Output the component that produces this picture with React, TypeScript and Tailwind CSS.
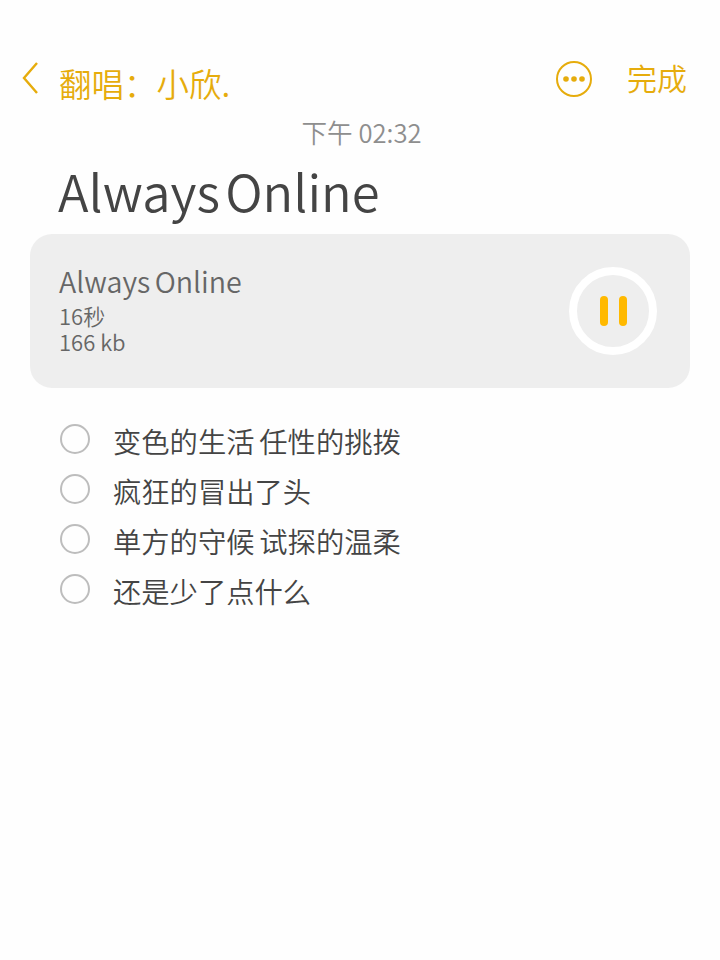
export default function App() {
  const font = { fontFamily: '"Noto Sans CJK SC", "Noto Sans", sans-serif' };
  const lines = ["变色的生活 任性的挑拨", "疯狂的冒出了头", "单方的守候 试探的温柔", "还是少了点什么"];
  return (
    <div className="w-[720px] h-[960px] bg-[#fefefe] overflow-hidden pt-[56px] flex flex-col" style={font}>
      <div className="flex items-center h-[48px] pl-[22px] pr-[33px] text-[#e6ac0c]">
        <svg width="17" height="36" viewBox="0 0 17 36" fill="none" className="mt-[-4px]">
          <path d="M15 3 L2 18 L15 33" stroke="#e6ac0c" strokeWidth="2.4" />
        </svg>
        <span className="ml-[20px] text-[32.5px] leading-[48px] font-[350] mt-[5px]">翻唱：小欣.</span>
        <svg width="36" height="36" viewBox="0 0 36 36" fill="none" className="ml-auto mt-[-2px]">
          <circle cx="18" cy="18" r="17" stroke="#e6ac0c" strokeWidth="2" />
          <circle cx="10" cy="18" r="2.8" fill="#e6ac0c" />
          <circle cx="18" cy="18" r="2.8" fill="#e6ac0c" />
          <circle cx="26" cy="18" r="2.8" fill="#e6ac0c" />
        </svg>
        <span className="ml-[35px] text-[30px] leading-[48px] font-[350] mt-[-6px]">完成</span>
      </div>
      <div className="text-center text-[25.6px] leading-[40px] font-[350] text-[#8e8e8e] mt-[8px] mb-[1px] pl-[3px]">下午 02:32</div>
      <div className="pl-[58px] text-[50.7px] leading-[64px] font-[350] text-[#444444] mt-[5px] mb-[2px] [word-spacing:-6px]">Always Online</div>
      <div className="mx-[30px] mt-[10px] h-[154px] rounded-[22px] bg-[#eeeeee] flex items-center pl-[29px] pr-[33px]">
        <div className="flex flex-col text-[#666666] font-[350] mt-[-8px]">
          <span className="text-[28.6px] leading-[40px] [word-spacing:-2px]">Always Online</span>
          <span className="text-[22px] leading-[26px] mt-[1px]">16秒</span>
          <span className="text-[22px] leading-[26px]">166 kb</span>
        </div>
        <div className="ml-auto w-[88px] h-[88px] rounded-full border-[8px] border-white flex items-center justify-center gap-[11px]">
          <div className="w-[8px] h-[30px] rounded-full bg-[#ffb900]" />
          <div className="w-[8px] h-[30px] rounded-full bg-[#ffb900]" />
        </div>
      </div>
      <div className="mt-[26px] pl-[60px] flex flex-col gap-[0px]">
        {lines.map((t) => (
          <div key={t} className="flex items-start h-[50px]">
            <div className="w-[30px] h-[30px] rounded-full border-2 border-[#bdbdbd] mt-[10px]" />
            <span className="ml-[23px] text-[28.3px] leading-[50px] font-[350] text-[#444444] mt-[2px] [word-spacing:-1.5px]">{t}</span>
          </div>
        ))}
      </div>
    </div>
  );
}
